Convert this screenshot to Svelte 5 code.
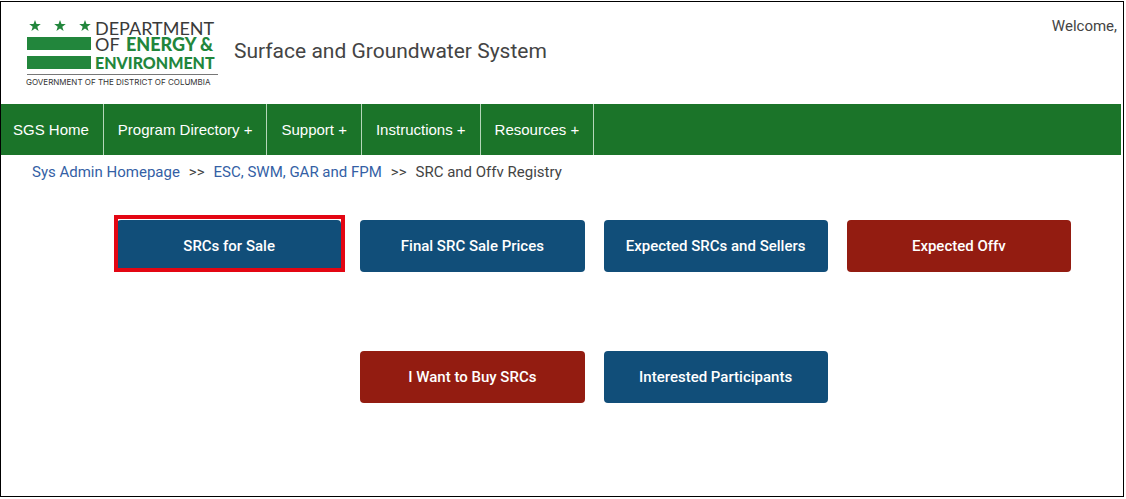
<script>
  const menu = ['SGS Home', 'Program Directory +', 'Support +', 'Instructions +', 'Resources +'];
  const actions = [
    { label: 'SRCs for Sale', highlighted: true },
    { label: 'Final SRC Sale Prices' },
    { label: 'Expected SRCs and Sellers' },
    { label: 'Expected Offv', red: true },
    { label: 'I Want to Buy SRCs', red: true, second: true },
    { label: 'Interested Participants' }
  ];
</script>

<div class="page">
  <header>
    <svg class="logo" width="194" height="70" viewBox="0 0 194 70" role="img" aria-label="Department of Energy & Environment">
      <defs>
        <path id="star" d="M0-6 1.5-1.9 5.8-1.9 2.3.8 3.6 5 0 2.4-3.6 5-2.3.8-5.8-1.9-1.5-1.9Z" />
      </defs>
      <g class="green">
        <use href="#star" x="9" y="10" />
        <use href="#star" x="34" y="10" />
        <use href="#star" x="59" y="10" />
        <rect x="1" y="21" width="64" height="13" />
        <rect x="1" y="40" width="64" height="13" />
      </g>
      <text class="big" x="69" y="19">DEPARTMENT</text>
      <text class="big" x="69" y="35">OF</text>
      <text class="mid bold" x="100" y="35">ENERGY &amp;</text>
      <text class="low bold" x="69" y="53">ENVIRONMENT</text>
      <rect class="rule" x="1" y="58" width="191" height="1" />
      <text class="small" x="0" y="69">GOVERNMENT OF THE DISTRICT OF COLUMBIA</text>
    </svg>
    <h1>Surface and Groundwater System</h1>
    <span class="welcome">Welcome,</span>
  </header>

  <nav aria-label="Main">
    {#each menu as item}
      <a href="#top">{item}</a>
    {/each}
  </nav>

  <div class="crumbs">
    <a href="#home">Sys Admin Homepage</a>
    <span>&gt;&gt;</span>
    <a href="#programs">ESC, SWM, GAR and FPM</a>
    <span>&gt;&gt;</span>
    <span>SRC and Offv Registry</span>
  </div>

  <main>
    {#each actions as action}
      <button class:red={action.red} class:second={action.second} class:highlighted={action.highlighted}>
        {action.label}
      </button>
    {/each}
  </main>
</div>

<style>
  :global(body) {
    background: #fff;
  }
  .page {
    box-sizing: border-box;
    min-height: calc(100vh - 3px);
    margin: 1px 2px 2px 0;
    border: 1px solid #000;
    font-family: Roboto, sans-serif;
    font-size: 15px;
    color: #444;
  }
  header {
    display: flex;
    align-items: flex-start;
    height: 102px;
    padding: 0 6px 0 25px;
    box-sizing: border-box;
  }
  .logo {
    flex: none;
    margin-top: 14px;
    font-family: Lato, sans-serif;
    overflow: visible;
  }
  .green,
  .bold {
    fill: #22863c;
  }
  .big {
    font-size: 18px;
    fill: #3a3a3a;
  }
  .bold {
    font-weight: 900;
  }
  .mid {
    font-size: 18px;
  }
  .low {
    font-size: 16px;
  }
  .rule {
    fill: #777;
  }
  .small {
    font-family: Inter, sans-serif;
    font-size: 8px;
    fill: #333;
  }
  h1 {
    margin: 37px 0 0 14px;
    font-size: 21px;
    line-height: 24px;
    font-weight: 400;
  }
  .welcome {
    margin: 14px 0 0 auto;
    line-height: 20px;
  }
  nav {
    display: flex;
    margin-right: 2px;
    background: #1b7429;
    font-family: "Liberation Sans", sans-serif;
  }
  nav a {
    padding: 0 14px;
    border-right: 1px solid #b5d6b9;
    line-height: 51px;
    color: #fff;
    text-decoration: none;
  }
  nav a:first-child {
    padding-left: 12px;
  }
  .crumbs {
    display: flex;
    gap: 9px;
    padding: 7px 31px;
    line-height: 20px;
  }
  .crumbs a {
    color: #345fa5;
    text-decoration: none;
  }
  main {
    display: grid;
    grid-template-columns: repeat(4, 1fr);
    gap: 79px 19px;
    padding: 31px 52px 40px 116px;
  }
  button {
    position: relative;
    height: 52px;
    padding: 0;
    border: 0;
    border-radius: 4px;
    background: #114e79;
    color: #fff;
    font: 500 15px/20px Roboto, sans-serif;
  }
  .red {
    background: #931c11;
  }
  .second {
    grid-column: 2;
  }
  .highlighted::after {
    content: "";
    position: absolute;
    inset: -5px -4px 0 -3px;
    border: 4px solid #e30613;
  }
</style>
